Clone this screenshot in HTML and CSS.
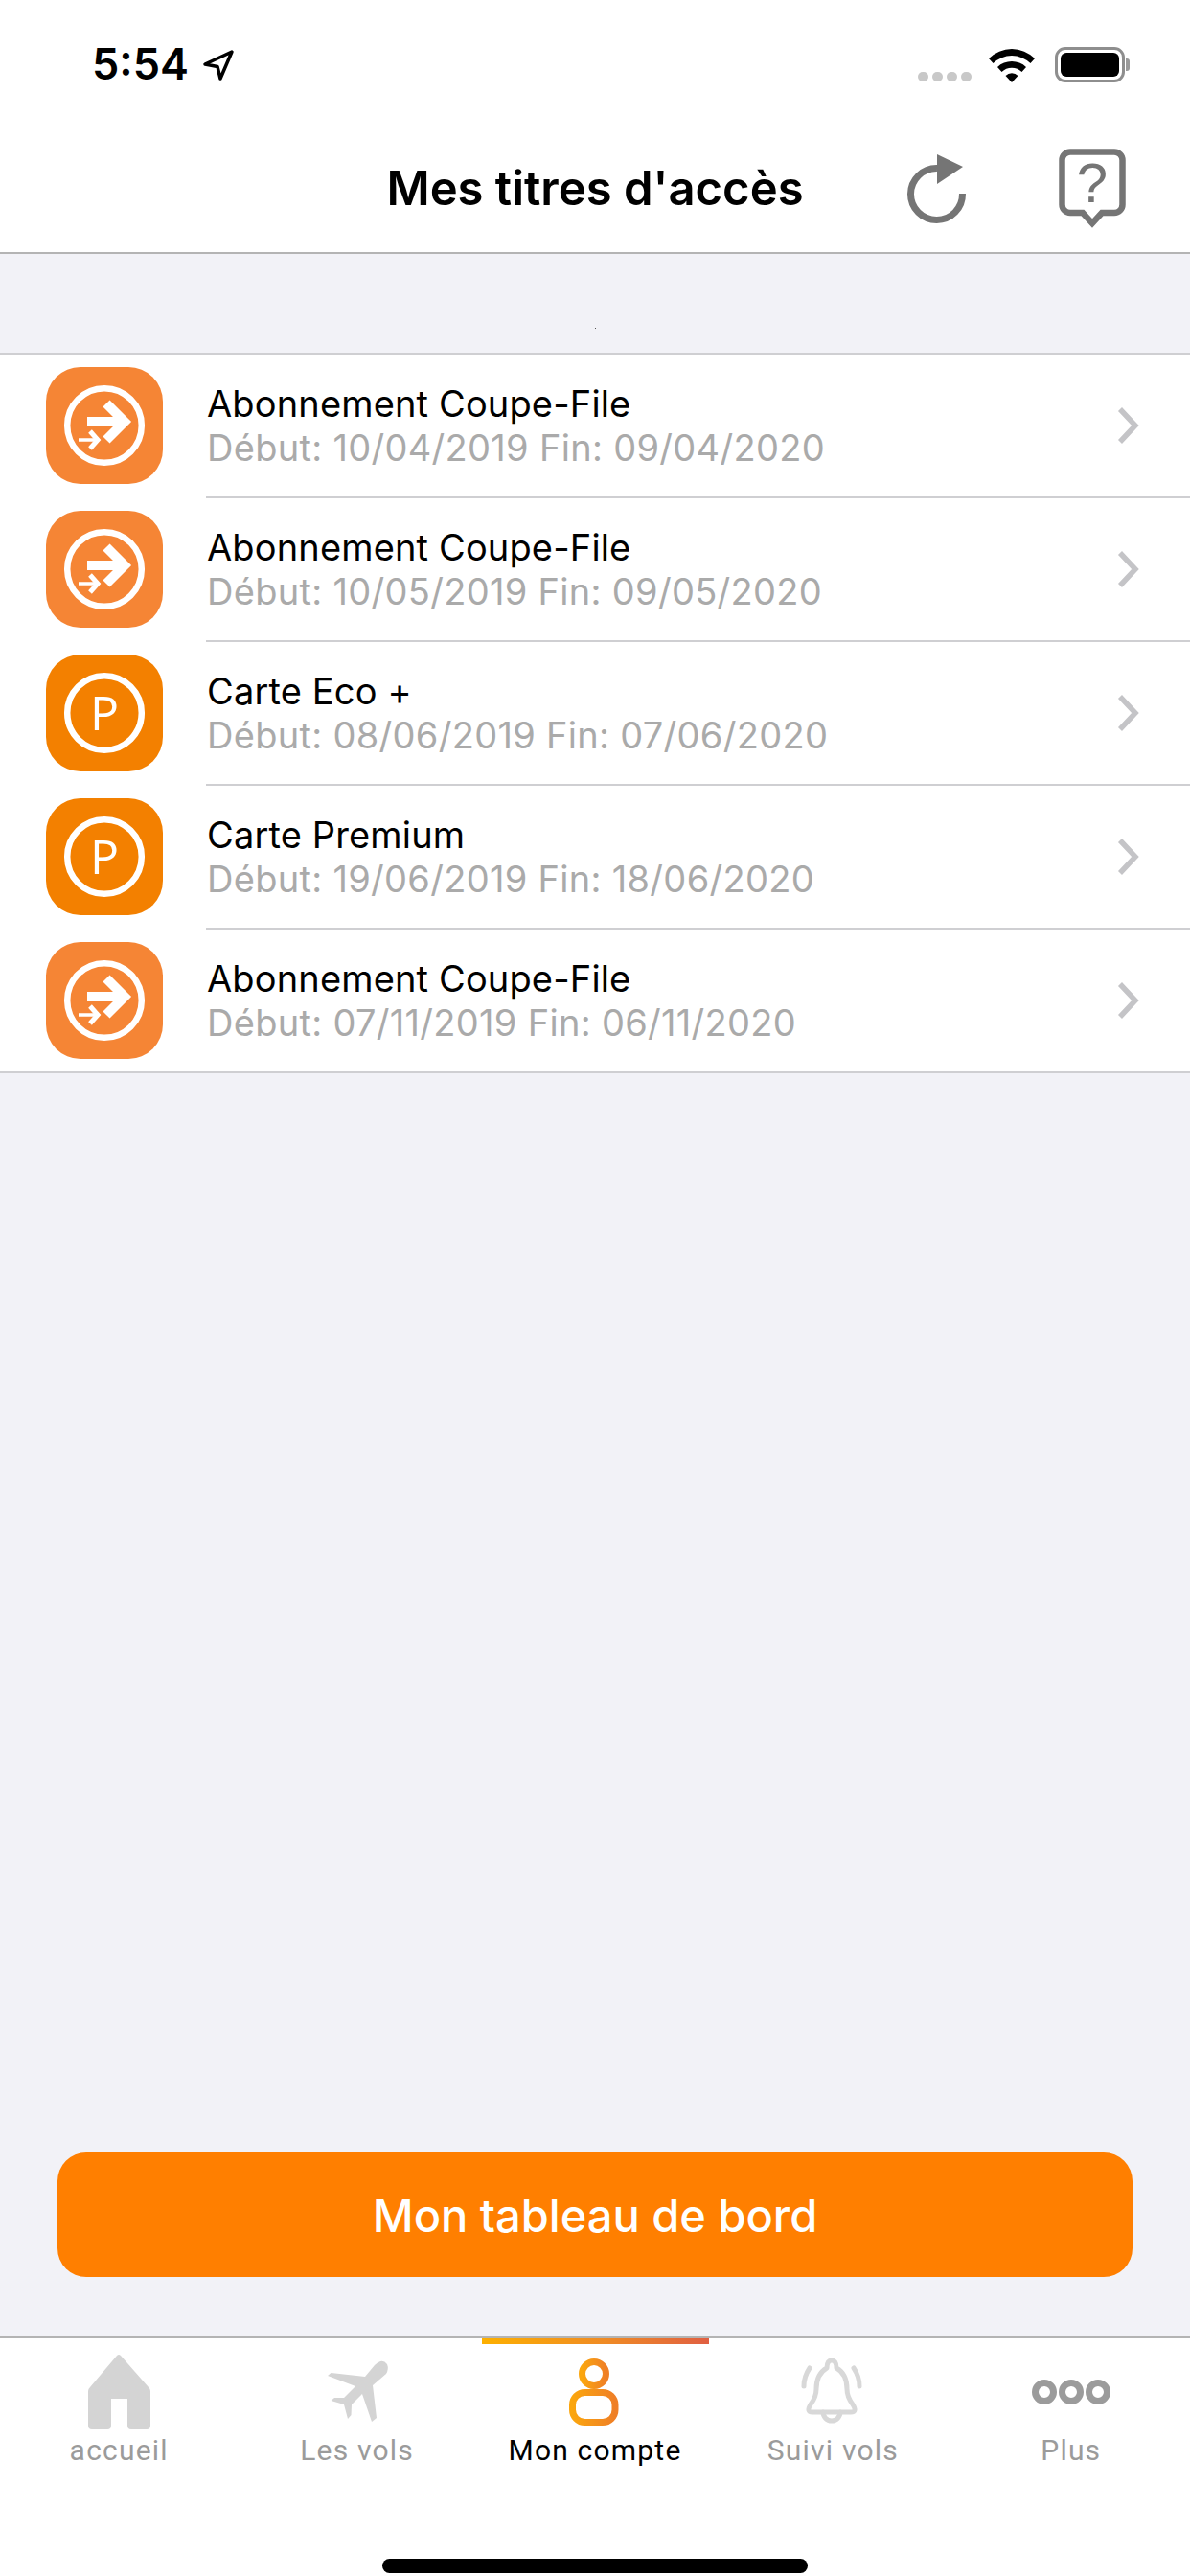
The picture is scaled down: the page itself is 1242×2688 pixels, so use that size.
FILE: index.html
```html
<!doctype html>
<html lang="fr">
  <head>
    <title>Mes titres d'accès</title>
    <meta charset="utf-8" />
    <link rel="stylesheet" href="styles.css">
  </head>
  <body>
    <!-- status bar -->
    <div class="status">
      <div class="status_left">
        <span class="time">5:54</span>
        <svg class="loc" width="34" height="34" viewBox="0 0 34 34"><path d="M31 3 L3 16 L16 18.5 L19 31 Z" fill="none" stroke="#000" stroke-width="3.5" stroke-linejoin="round"/></svg>
      </div>
      <div class="status_right">
        <div class="dots"><span></span><span></span><span></span><span></span></div>
        <svg class="wifi" width="50" height="37" viewBox="0 0 50 37">
          <path d="M1 12 A34 34 0 0 1 49 12 L44.5 17 A28 28 0 0 0 5.500 17 Z"/>
          <path d="M10 21 A22 22 0 0 1 40 21 L35.500 26 A15 15 0 0 0 14.500 26 Z"/>
          <path d="M18.500 30 A9 9 0 0 1 31.500 30 L25 37 Z"/>
        </svg>
        <div class="battery"><div class="battery_fill"></div></div>
      </div>
    </div>

    <!-- nav bar -->
    <div class="nav">
      <div></div>
      <h1>Mes titres d'accès</h1>
      <div class="nav_actions">
        <svg width="76" height="84" viewBox="0 0 76 84">
          <path d="M64.500 47 A27 27 0 1 1 38 20.500" fill="none" stroke="#757575" stroke-width="7"/>
          <path d="M38 6 L65 19 L38 37 Z" fill="#757575"/>
        </svg>
        <svg class="help" width="80" height="90" viewBox="0 0 80 90">
          <path d="M17 8.500 H63 A8.500 8.500 0 0 1 71.500 17 V63.500 A8.500 8.500 0 0 1 63 72 H50 L40 83 L30 72 H17 A8.500 8.500 0 0 1 8.500 63.500 V17 A8.500 8.500 0 0 1 17 8.500 Z" fill="none" stroke="#757575" stroke-width="6.500"/>
          <text x="40" y="61" text-anchor="middle" class="help_mark">?</text>
        </svg>
      </div>
    </div>

    <div class="main">
      <div class="spacer"><span class="speck"></span></div>

      <div class="list">
        <div class="row">
          <svg class="badge" width="122" height="122" viewBox="0 0 122 122"><use href="#coupe_file"/></svg>
          <div class="row_body">
            <div class="row_text">
              <div class="row_title">Abonnement Coupe-File</div>
              <div class="row_sub">Début: 10/04/2019 Fin: 09/04/2020</div>
            </div>
            <svg class="chev" width="28" height="42" viewBox="0 0 28 42"><path d="M5 4 L21 21 L5 38" fill="none" stroke="#c4c4c7" stroke-width="5.500"/></svg>
          </div>
        </div>
        <div class="row">
          <svg class="badge" width="122" height="122" viewBox="0 0 122 122"><use href="#coupe_file"/></svg>
          <div class="row_body">
            <div class="row_text">
              <div class="row_title">Abonnement Coupe-File</div>
              <div class="row_sub">Début: 10/05/2019 Fin: 09/05/2020</div>
            </div>
            <svg class="chev" width="28" height="42" viewBox="0 0 28 42"><path d="M5 4 L21 21 L5 38" fill="none" stroke="#c4c4c7" stroke-width="5.500"/></svg>
          </div>
        </div>
        <div class="row">
          <svg class="badge" width="122" height="122" viewBox="0 0 122 122"><use href="#parking"/><text x="61" y="79" text-anchor="middle" class="badge_p">P</text></svg>
          <div class="row_body">
            <div class="row_text">
              <div class="row_title">Carte Eco +</div>
              <div class="row_sub">Début: 08/06/2019 Fin: 07/06/2020</div>
            </div>
            <svg class="chev" width="28" height="42" viewBox="0 0 28 42"><path d="M5 4 L21 21 L5 38" fill="none" stroke="#c4c4c7" stroke-width="5.500"/></svg>
          </div>
        </div>
        <div class="row">
          <svg class="badge" width="122" height="122" viewBox="0 0 122 122"><use href="#parking"/><text x="61" y="79" text-anchor="middle" class="badge_p">P</text></svg>
          <div class="row_body">
            <div class="row_text">
              <div class="row_title">Carte Premium</div>
              <div class="row_sub">Début: 19/06/2019 Fin: 18/06/2020</div>
            </div>
            <svg class="chev" width="28" height="42" viewBox="0 0 28 42"><path d="M5 4 L21 21 L5 38" fill="none" stroke="#c4c4c7" stroke-width="5.500"/></svg>
          </div>
        </div>
        <div class="row">
          <svg class="badge" width="122" height="122" viewBox="0 0 122 122"><use href="#coupe_file"/></svg>
          <div class="row_body">
            <div class="row_text">
              <div class="row_title">Abonnement Coupe-File</div>
              <div class="row_sub">Début: 07/11/2019 Fin: 06/11/2020</div>
            </div>
            <svg class="chev" width="28" height="42" viewBox="0 0 28 42"><path d="M5 4 L21 21 L5 38" fill="none" stroke="#c4c4c7" stroke-width="5.500"/></svg>
          </div>
        </div>
      </div>

      <button class="board_btn">Mon tableau de bord</button>
    </div>

    <!-- tab bar -->
    <div class="tabbar">
      <div class="tabs">
        <div class="tab">
          <svg width="72" height="78" viewBox="0 0 72 78"><path d="M36 0 Q37 0 38 1 L67 34 Q69 36 69 38 V74 Q69 78 65 78 H49 Q45 78 45 74 V46 H28 V74 Q28 78 24 78 H8 Q4 78 4 74 V38 Q4 36 6 34 L34 1 Q35 0 36 0 Z" fill="#d4d4d4"/></svg>
          <span>accueil</span>
        </div>
        <div class="tab">
          <svg width="72" height="78" viewBox="0 0 72 78"><path d="M60 7 Q64 6 67 10 Q69 15 66 20 L52 32 L56 66 L51 70 L41 41 L30 52 L29.500 63 L26 67 L22 52 L8.500 48 L12 45 L22 45 L34 33 L5 22 L8.500 19 L44 23 L54 11 Q57 8 60 7 Z" fill="#d4d4d4"/></svg>
          <span>Les vols</span>
        </div>
        <div class="tab active">
          <svg width="72" height="78" viewBox="0 0 72 78">
            <defs><linearGradient id="me_grad" x1="0" y1="0" x2="1" y2="0"><stop offset="0" stop-color="#fba60e"/><stop offset="1" stop-color="#ef7f26"/></linearGradient></defs>
            <g fill="none" stroke="url(#me_grad)" stroke-width="7">
              <ellipse cx="35" cy="20" rx="12.500" ry="12.500"/>
              <rect x="12.500" y="39.500" width="44.500" height="31" rx="13"/>
            </g>
          </svg>
          <span>Mon compte</span>
        </div>
        <div class="tab">
          <svg width="72" height="78" viewBox="0 0 72 78">
            <g fill="none" stroke="#d8d8d8" stroke-width="5" stroke-linecap="round" stroke-linejoin="round">
              <path d="M30 14 Q30 6 35 6 Q40 6 40 14 Q51 20 51 36 Q51 44 57 52 Q62 60 55 60 H15 Q8 60 13 52 Q19 44 19 36 Q19 20 30 14 Z"/>
              <path d="M26 60 A9 9 0 0 0 44 60"/>
              <path d="M12 14 Q6 23 6 33"/>
              <path d="M58 14 Q64 23 64 33"/>
            </g>
          </svg>
          <span>Suivi vols</span>
        </div>
        <div class="tab">
          <svg width="84" height="78" viewBox="0 0 84 78">
            <g fill="none" stroke="#9b9b9b" stroke-width="7">
              <circle cx="14" cy="39" r="9.500"/>
              <circle cx="42" cy="39" r="9.500"/>
              <circle cx="70" cy="39" r="9.500"/>
            </g>
          </svg>
          <span>Plus</span>
        </div>
      </div>
      <div class="home_bar"></div>
    </div>

    <!-- shared badge drawings -->
    <svg class="defs" width="0" height="0">
      <defs>
        <g id="coupe_file">
          <rect width="122" height="122" rx="36" fill="#f58535"/>
          <circle cx="61" cy="61" r="38.800" fill="none" stroke="#fff" stroke-width="6.500"/>
          <path d="M43 57 H82" fill="none" stroke="#fff" stroke-width="10"/>
          <path d="M63 38 L82 57 L63 76" fill="none" stroke="#fff" stroke-width="10"/>
          <path d="M34 76 H51" fill="none" stroke="#fff" stroke-width="3.500"/>
          <path d="M46 67 L54 76 L46 85" fill="none" stroke="#fff" stroke-width="5"/>
        </g>
        <g id="parking">
          <rect width="122" height="122" rx="36" fill="#f38000"/>
          <circle cx="61" cy="61" r="38.800" fill="none" stroke="#fff" stroke-width="6.500"/>
        </g>
      </defs>
    </svg>
  </body>
</html>
```

FILE: styles.css
```css
/* Whole page */
*{
  box-sizing: border-box;
}
html, body{
  margin: 0;
  height: 2688px;
}
body{
  width: 1242px;
  display: flex;
  flex-direction: column;
  background-color: #f2f2f7;
  font-family: Inter, Roboto, 'Liberation Sans', sans-serif;
  overflow: hidden;
}
/* Status bar */
.status{
  height: 132px;
  background-color: #fff;
  display: flex;
  justify-content: space-between;
  padding: 49px 68px 0 96px;
}
.status_left{
  display: flex;
  align-items: flex-start;
  gap: 14px;
}
.time{
  font-size: 45px;
  line-height: 36px;
  font-weight: 600;
  color: #000;
}
.loc{
  margin-top: 2px;
}
.status_right{
  display: flex;
  align-items: flex-start;
}
.dots{
  display: flex;
  gap: 4px;
  margin-top: 26px;
  margin-right: 17px;
}
.dots span{
  width: 11px;
  height: 10px;
  border-radius: 5px;
  background-color: #c8c8c8;
}
.wifi{
  margin-right: 20px;
}
.battery{
  width: 73px;
  height: 37px;
  border: 3px solid #8e8e8e;
  border-radius: 11px;
  padding: 3px;
  position: relative;
}
.battery::after{
  content: "";
  position: absolute;
  right: -8px;
  top: 9px;
  width: 4px;
  height: 13px;
  border-radius: 0 3px 3px 0;
  background-color: #999;
}
.battery_fill{
  height: 100%;
  border-radius: 6px;
  background-color: #000;
}
/* Nav bar */
.nav{
  height: 133px;
  background-color: #fff;
  border-bottom: 2px solid #b4b4b4;
  display: grid;
  grid-template-columns: 1fr auto 1fr;
  align-items: start;
}
h1{
  margin: 0;
  padding-top: 35px;
  font-size: 49px;
  line-height: 60px;
  font-weight: 600;
  color: #000;
}
.nav_actions{
  display: flex;
  justify-content: flex-end;
  align-items: flex-start;
  gap: 84px;
  padding: 23px 62px 0 0;
}
.help{
  margin-top: -5px;
}
.help_mark{
  font-family: 'Liberation Sans', sans-serif;
  font-size: 58px;
  fill: #757575;
}
/* Main area */
.main{
  flex: 1;
  display: flex;
  flex-direction: column;
}
.spacer{
  height: 103px;
  display: flex;
  justify-content: center;
  padding-top: 77px;
}
.speck{
  width: 1px;
  height: 1px;
  background-color: #555;
}
.list{
  background-color: #fff;
  border-top: 2px solid #cfcfd2;
  border-bottom: 2px solid #cfcfd2;
}
.row{
  display: flex;
  height: 150px;
  padding-left: 48px;
}
.row:last-child{
  height: 148px;
}
.badge{
  margin-top: 13px;
  margin-right: 45px;
  flex: none;
}
.badge_p{
  font-family: 'Open Sans', sans-serif;
  font-size: 50px;
  font-weight: 500;
  fill: #fff;
}
.row_body{
  flex: 1;
  display: flex;
  justify-content: space-between;
  align-items: center;
  border-bottom: 2px solid #cfcfd2;
  padding: 0 50px 0 1px;
}
.row:last-child .row_body{
  border-bottom: none;
}
.row_text{
  font-size: 38px;
  line-height: 46px;
}
.row_title{
  color: #000;
  letter-spacing: 0.15px;
}
.row_sub{
  color: #aaa;
  letter-spacing: 0.3px;
}
.defs{
  position: absolute;
}
/* Orange button */
.board_btn{
  margin: auto 60px 62px;
  height: 130px;
  border: none;
  border-radius: 30px;
  background-color: #ff7f00;
  color: #fff;
  font-family: Inter, Roboto, 'Liberation Sans', sans-serif;
  font-size: 47px;
  font-weight: 500;
}
/* Tab bar */
.tabbar{
  height: 250px;
  background-color: #fff;
  border-top: 2px solid #b4b4b4;
}
.tabs{
  display: grid;
  grid-template-columns: repeat(5, 1fr);
}
.tab{
  position: relative;
  display: flex;
  flex-direction: column;
  align-items: center;
  padding-top: 17px;
  color: #9b9b9b;
  font-family: Roboto, Inter, sans-serif;
  font-size: 30px;
  line-height: 36px;
  letter-spacing: 1.2px;
}
.tab span{
  margin-top: 4px;
}
.tab.active{
  color: #000;
}
.tab.active::before{
  content: "";
  position: absolute;
  top: 0;
  left: 6px;
  right: 5px;
  height: 6px;
  background: linear-gradient(90deg, #fdb000, #ef8a25 55%, #e05f42);
}
.home_bar{
  width: 444px;
  height: 15px;
  margin: 95px auto 0;
  border-radius: 8px;
  background-color: #000;
}
```
